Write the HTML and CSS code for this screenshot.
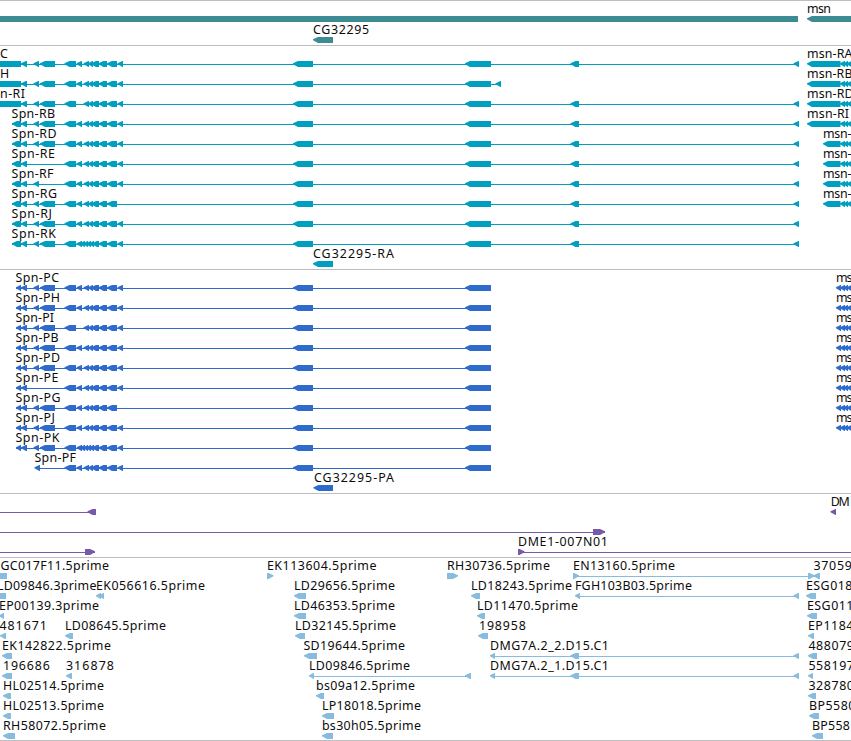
FILE: index.html
```html
<!DOCTYPE html>
<html lang="en">
<head>
<meta charset="utf-8">
<title>Genome browser</title>
<link rel="stylesheet" href="styles.css">
</head>
<body>
<main class="browser">
  <section class="track genes" id="genes"></section>
  <section class="track transcripts" id="transcripts"></section>
  <section class="track proteins" id="proteins"></section>
  <section class="track clones" id="clones"></section>
  <section class="track ests" id="ests"></section>
</main>
<script src="tracks.js"></script>
</body>
</html>
```
FILE: styles.css
```css
body {
  margin: 0;
  background: #fff;
}

.browser {
  width: 851px;
  height: 741px;
  overflow: hidden;
  box-sizing: border-box;
  border-bottom: 1px solid #bebebe;
}

.track {
  display: flex;
  flex-direction: column;
  border-top: 1px solid #bebebe;
  padding: 1px 0 2px;
}

.row {
  display: block;
  width: 851px;
  height: 20px;
  overflow: visible;
}

.genes {
  gap: 1px;
}

.row text {
  font: 12.4px "Noto Sans", "DejaVu Sans", sans-serif;
  fill: #0c0c0c;
}

.genes { color: #3d8c94; }
.transcripts { color: #009fc0; }
.proteins { color: #2f6bcd; }
.clones { color: #7659a9; }
.ests { color: #87bcde; }

.row path,
.row rect {
  fill: currentColor;
}
```
FILE: tracks.js
```js
// A row is { labels: [[x, width, text]], lines: [[x0, x1]], left/right/block: [[x0, x1]] }.
const NS = "http://www.w3.org/2000/svg";

function add(parent, name, attrs) {
  const el = document.createElementNS(NS, name);
  for (const key in attrs) el.setAttribute(key, attrs[key]);
  parent.appendChild(el);
  return el;
}

function arrow(a, b, dir) {
  const w = b - a;
  const h = Math.min(w, 5.5);
  if (dir < 0) {
    return `M${a} 16.2L${a + h * 0.5} 14.9L${a + h * 0.9} 14H${b}V20H${a + h * 0.9}L${a + h * 0.5} 18.8L${a} 17.2Z`;
  }
  return `M${b} 16.2L${b - h * 0.5} 14.9L${b - h * 0.9} 14H${a}V20H${b - h * 0.9}L${b - h * 0.5} 18.8L${b} 17.2Z`;
}

function draw(id, rows) {
  const track = document.getElementById(id);
  const inset = id === "ests" || id === "clones" ? 0.4 : 0;
  for (const row of rows) {
    const svg = add(track, "svg", { class: "row", viewBox: "0 0 851 20" });
    for (const [a, b] of row.lines || []) add(svg, "rect", { x: a, y: 17, width: b - a, height: 1 });
    for (const [a, b] of row.block || []) add(svg, "rect", { x: a, y: 14, width: b - a, height: 6 });
    for (const [a, b] of row.left || []) add(svg, "path", { d: arrow(a, b, -1) });
    for (const [a, b] of row.right || []) add(svg, "path", { d: arrow(a, b, 1) });
    for (const [x, w, text] of row.labels || []) {
      add(svg, "text", { x: x + inset, y: 11, textLength: w - 0.5 }).textContent = text;
    }
  }
}

const B = [33.5, 39], C = [40, 55], E = [76.5, 82];
const D = [64.5, 76];
const cluster = [[83.5, 89], [88, 93], [91, 99], [98.5, 107]];
const dense = [[80, 85], [83.5, 88], [86, 91], [89, 94], [92, 99], [98.5, 107]];
const F = [107, 117], G = [117.5, 123];
const P = [293, 313], Q = [465, 491], R = [570.5, 579], S = [793.5, 799];
const all = [B, C, D, E, ...cluster, F, G];
const noE = [B, C, D, ...cluster, F, G];
const noBC = [D, E, ...cluster, F, G];
const noC = [B, ...noBC];
const noG = [B, C, D, E, ...cluster, F];
const extra = [B, C, D, E, ...dense, F, G];

const msnLong = [[807, 840.5], [840, 845], [843.5, 848], [846.5, 852]];
const msnShort = [[823, 840.5], [840, 845], [843.5, 848], [846.5, 852]];
const msnCds = [[836, 841], [840, 845], [843.5, 848], [846.5, 852]];

draw("genes", [
  { labels: [[807, 24.5, "msn"]], block: [[0, 798]], left: [[807, 852]] },
  { labels: [[313, 56.5, "CG32295"]], left: [[313, 333]] }
]);

function transcript(label, exons, right) {
  return { labels: [label, ...(right ? [right] : [])], lines: [[12, 799]], left: [[12, 21], [21, 27], ...exons, P, Q, R, S,
    ...(right ? (right[0] < 810 ? msnLong : msnShort) : [])] };
}
const rc = transcript([0, 8, "C"], all, [807, 46, "msn-RA"]);
const rh = { labels: [[0, 9.5, "H"], [807, 46, "msn-RB"]], lines: [[0, 501]], left: [[21, 27], ...all, P, Q, [495.5, 501], ...msnLong] };
const ri = transcript([0, 25.5, "n-RI"], noE, [807, 47, "msn-RD"]);
for (const r of [rc, rh, ri]) r.block = [[0, 21]];
draw("transcripts", [
  rc, rh, ri,
  transcript([11.5, 44, "Spn-RB"], all, [807, 42.5, "msn-RI"]),
  transcript([11.5, 45.5, "Spn-RD"], all, [823, 29, "msn-"]),
  transcript([11.5, 44, "Spn-RE"], noBC, [823, 29, "msn-"]),
  transcript([11.5, 42.5, "Spn-RF"], noC, [823, 29, "msn-"]),
  transcript([11.5, 46, "Spn-RG"], noG, [823, 29, "msn-"]),
  transcript([11.5, 41, "Spn-RJ"], all),
  transcript([11.5, 45, "Spn-RK"], extra),
  { labels: [[313, 81.5, "CG32295-RA"]], left: [[313, 333]] }
]);

function protein(label, exons, more) {
  return { labels: [label, ...(more ? [[836, 17, "ms"]] : [])], lines: [[16, 491]],
    left: [[16, 21], [21, 27], ...exons, P, Q, ...(more ? msnCds : [])] };
}
draw("proteins", [
  protein([15.5, 44, "Spn-PC"], all, true),
  protein([15.5, 45, "Spn-PH"], all, true),
  protein([15.5, 39, "Spn-PI"], noE, true),
  protein([15.5, 43.5, "Spn-PB"], all, true),
  protein([15.5, 45, "Spn-PD"], all, true),
  protein([15.5, 43.5, "Spn-PE"], noBC, true),
  protein([15.5, 45.5, "Spn-PG"], noG, true),
  protein([15.5, 40, "Spn-PJ"], all, true),
  protein([15.5, 44.5, "Spn-PK"], extra),
  { labels: [[34.5, 42, "Spn-PF"]], lines: [[36, 491]], left: [[34.5, 40], ...noBC, P, Q] },
  { labels: [[314, 80.5, "CG32295-PA"]], left: [[313.5, 333]] }
]);

draw("clones", [
  { labels: [[830.3, 19.5, "DM"]], lines: [[0, 96]], left: [[87.5, 96], [830.5, 836]] },
  { lines: [[0, 605]], right: [[593, 605]] },
  { labels: [[517.5, 90.5, "DME1-007N01"]], lines: [[0, 95], [518, 851]], right: [[85, 95], [518, 524.5]] }
]);

draw("ests", [
  { labels: [[0, 109, "GC017F11.5prime"], [266.5, 110, "EK113604.5prime"], [446.5, 103.5, "RH30736.5prime"],
      [572.5, 102.5, "EN13160.5prime"], [813, 39, "37059"]],
    lines: [[574, 815]], block: [[0, 7]], right: [[267, 273.5], [447, 458], [573, 579], [808, 814.5]], left: [[813.5, 820]] },
  { labels: [[-3.5, 100, "LD09846.3prime"], [95.5, 109.5, "EK056616.5prime"], [293.5, 101.5, "LD29656.5prime"],
      [470.5, 101.5, "LD18243.5prime"], [574.5, 117.5, "FGH103B03.5prime"], [805.5, 47, "ESG018"]],
    lines: [[576, 799]], block: [[0, 6]],
    left: [[96, 101], [99, 104], [294, 306], [471, 480], [575, 580], S, [806, 816]] },
  { labels: [[-1.5, 100.5, "EP00139.3prime"], [293.5, 101.5, "LD46353.5prime"], [476.5, 101.5, "LD11470.5prime"], [806.5, 47, "ESG011"]],
    left: [[-1, 4], [294, 306], [477, 485], [807, 817]] },
  { labels: [[-1, 48, "481671"], [64.5, 101.5, "LD08645.5prime"], [294.5, 101.5, "LD32145.5prime"], [478.5, 47.5, "198958"], [807.5, 46, "EP1184"]],
    left: [[0, 6], [65, 73], [295, 305], [478, 488], [808, 814]] },
  { labels: [[1.5, 109.5, "EK142822.5prime"], [303, 102, "SD19644.5prime"], [489.5, 119.5, "DMG7A.2_2.D15.C1"], [808, 46, "488079"]],
    lines: [[491, 799]], left: [[2, 12], [304, 317], [490, 495], R, S, [808, 817]] },
  { labels: [[2.5, 47.5, "196686"], [65.5, 48.5, "316878"], [308.5, 101.5, "LD09846.5prime"], [489.5, 119.5, "DMG7A.2_1.D15.C1"], [808, 46, "558197"]],
    lines: [[310, 471], [491, 799]], left: [[2, 12], [66, 72], [309, 314], [465, 471], [490, 495], R, S, [808, 813]] },
  { labels: [[2.5, 101.5, "HL02514.5prime"], [315.5, 99.5, "bs09a12.5prime"], [808, 46, "328780"]],
    left: [[3, 11], [316, 324], [808, 816]] },
  { labels: [[2.5, 101.5, "HL02513.5prime"], [321.5, 99.5, "LP18018.5prime"], [808.5, 47, "BP5580"]],
    left: [[3, 11], [322, 334], [809, 819]] },
  { labels: [[2.5, 103.5, "RH58072.5prime"], [321.5, 99.5, "bs30h05.5prime"], [811.5, 38.5, "BP558"]],
    left: [[3, 15], [322, 333], [812, 823]] }
]);
```
